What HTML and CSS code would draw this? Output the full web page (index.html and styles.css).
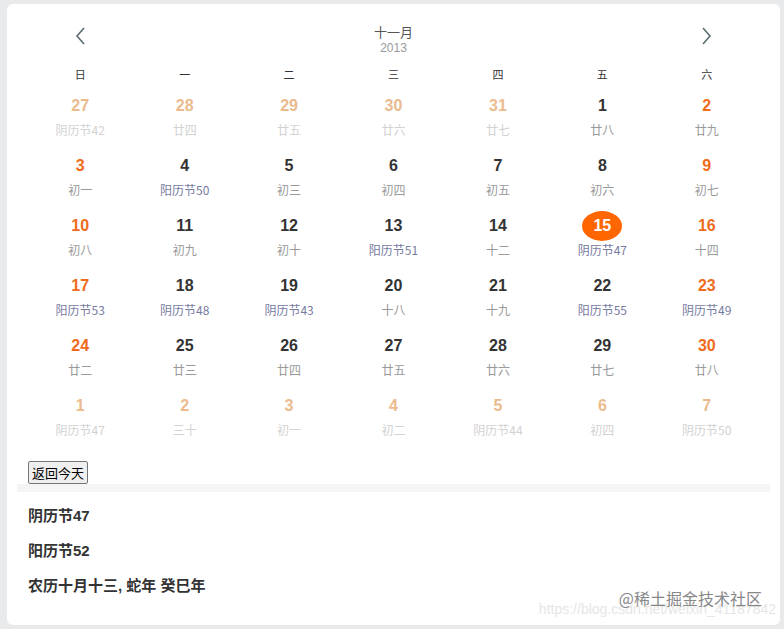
FILE: index.html
```html
<!DOCTYPE html>
<html lang="zh">
<head>
<meta charset="utf-8">
<link rel="stylesheet" href="styles.css">
</head>
<body>
<div class="card">
  <div class="header">
    <span class="nav"><svg width="12" height="20" viewBox="0 0 12 20"><path d="M10 2 L3 10 L10 18" fill="none" stroke="#5d6b73" stroke-width="1.6"/></svg></span>
    <div class="title"><div class="month">十一月</div><div class="year">2013</div></div>
    <span class="nav"><svg width="12" height="20" viewBox="0 0 12 20"><path d="M2 2 L9 10 L2 18" fill="none" stroke="#5d6b73" stroke-width="1.6"/></svg></span>
  </div>
  <div class="grid">
    <div class="wk">日</div><div class="wk">一</div><div class="wk">二</div><div class="wk">三</div><div class="wk">四</div><div class="wk">五</div><div class="wk">六</div>

    <div class="day other"><b>27</b><span>阴历节42</span></div>
    <div class="day other"><b>28</b><span>廿四</span></div>
    <div class="day other"><b>29</b><span>廿五</span></div>
    <div class="day other"><b>30</b><span>廿六</span></div>
    <div class="day other"><b>31</b><span>廿七</span></div>
    <div class="day"><b>1</b><span>廿八</span></div>
    <div class="day we"><b>2</b><span>廿九</span></div>

    <div class="day we"><b>3</b><span>初一</span></div>
    <div class="day"><b>4</b><span class="fest">阳历节50</span></div>
    <div class="day"><b>5</b><span>初三</span></div>
    <div class="day"><b>6</b><span>初四</span></div>
    <div class="day"><b>7</b><span>初五</span></div>
    <div class="day"><b>8</b><span>初六</span></div>
    <div class="day we"><b>9</b><span>初七</span></div>

    <div class="day we"><b>10</b><span>初八</span></div>
    <div class="day"><b>11</b><span>初九</span></div>
    <div class="day"><b>12</b><span>初十</span></div>
    <div class="day"><b>13</b><span class="fest">阳历节51</span></div>
    <div class="day"><b>14</b><span>十二</span></div>
    <div class="day today"><b>15</b><span class="fest">阴历节47</span></div>
    <div class="day we"><b>16</b><span>十四</span></div>

    <div class="day we"><b>17</b><span class="fest">阳历节53</span></div>
    <div class="day"><b>18</b><span class="fest">阴历节48</span></div>
    <div class="day"><b>19</b><span class="fest">阴历节43</span></div>
    <div class="day"><b>20</b><span>十八</span></div>
    <div class="day"><b>21</b><span>十九</span></div>
    <div class="day"><b>22</b><span class="fest">阳历节55</span></div>
    <div class="day we"><b>23</b><span class="fest">阴历节49</span></div>

    <div class="day we"><b>24</b><span>廿二</span></div>
    <div class="day"><b>25</b><span>廿三</span></div>
    <div class="day"><b>26</b><span>廿四</span></div>
    <div class="day"><b>27</b><span>廿五</span></div>
    <div class="day"><b>28</b><span>廿六</span></div>
    <div class="day"><b>29</b><span>廿七</span></div>
    <div class="day we"><b>30</b><span>廿八</span></div>

    <div class="day other"><b>1</b><span>阴历节47</span></div>
    <div class="day other"><b>2</b><span>三十</span></div>
    <div class="day other"><b>3</b><span>初一</span></div>
    <div class="day other"><b>4</b><span>初二</span></div>
    <div class="day other"><b>5</b><span>阴历节44</span></div>
    <div class="day other"><b>6</b><span>初四</span></div>
    <div class="day other"><b>7</b><span>阴历节50</span></div>
  </div>
  <button class="today-btn">返回今天</button>
  <div class="divider"></div>
  <div class="info">
    <p>阴历节47</p>
    <p>阳历节52</p>
    <p>农历十月十三, 蛇年 癸巳年</p>
  </div>
  <div class="watermark">
    <span class="wm-url">https://blog.csdn.net/weixin_41187842</span>
    <span class="wm-name">@稀土掘金技术社区</span>
  </div>
</div>
</body>
</html>
```
FILE: styles.css
```css
html, body {
  margin: 0;
  padding: 0;
}
body {
  background: #e8eaeb;
  font-family: "Liberation Sans", "Noto Sans CJK SC", sans-serif;
  color: #333;
  padding: 4px 4px 4px 7px;
}
.card {
  position: relative;
  background: #fff;
  border-radius: 6px;
  height: 621px;
  box-sizing: border-box;
  padding: 19px 21px 0 21px;
}
.header {
  display: grid;
  grid-template-columns: repeat(7, 1fr);
  align-items: start;
}
.header .nav {
  display: flex;
  justify-content: center;
  padding-top: 3px;
}
.header .nav:last-child {
  grid-column: 7;
}
.title {
  grid-column: 2 / 7;
  text-align: center;
}
.month {
  font-family: "Noto Sans CJK SC", sans-serif;
  font-size: 13px;
  line-height: 18px;
  color: #555;
}
.year {
  font-size: 12px;
  line-height: 15px;
  color: #999;
}
.grid {
  display: grid;
  grid-template-columns: repeat(7, 1fr);
  margin-top: 8px;
}
.wk {
  text-align: center;
  font-family: "Noto Sans CJK SC", sans-serif;
  font-size: 11px;
  line-height: 20px;
  color: #333;
  margin-bottom: 12px;
}
.day {
  height: 60px;
  display: flex;
  flex-direction: column;
  align-items: center;
}
.day b {
  font-size: 16px;
  line-height: 20px;
  font-weight: bold;
  color: #333;
}
.day span {
  margin-top: 5px;
  font-family: "Noto Sans CJK SC", sans-serif;
  font-size: 12px;
  line-height: 18px;
  color: #999;
}
.day span.fest {
  color: #767aa0;
}
.day.we b {
  color: #ef6b1c;
}
.day.other b {
  color: #ebbb8e;
}
.day.other span {
  color: #d2d2d2;
}
.day.today b {
  background: #ff6600;
  color: #fff;
  width: 40px;
  height: 30px;
  line-height: 30px;
  border-radius: 50%;
  text-align: center;
  margin-top: -5px;
}
.day.today span {
  margin-top: 0;
}
.today-btn {
  display: block;
  margin-top: 5px;
  font-family: "Noto Sans CJK SC", sans-serif;
  font-size: 13px;
  line-height: 19px;
  padding: 1px 3px;
  color: #000;
  background: #efefef;
  border: 1px solid #767676;
  border-radius: 2px;
}
.divider {
  height: 8px;
  background: #f5f5f5;
  margin: 0 -11px;
}
.info p {
  font-family: "Liberation Sans", "Noto Sans CJK SC", sans-serif;
  font-weight: bold;
  font-size: 15px;
  line-height: 20px;
  margin: 14px 0;
  color: #333;
}
.info p + p {
  margin-top: 15px;
}
.watermark {
  position: absolute;
  right: 4px;
  bottom: 8px;
  width: 280px;
  height: 40px;
}
.wm-url {
  position: absolute;
  right: 0;
  bottom: 0;
  font-family: "Liberation Sans", sans-serif;
  font-size: 14px;
  color: #e6e6e6;
  white-space: nowrap;
}
.wm-name {
  position: absolute;
  right: 14px;
  bottom: 7px;
  font-family: "Noto Sans CJK SC", sans-serif;
  font-size: 16px;
  color: #888;
  white-space: nowrap;
}
```
